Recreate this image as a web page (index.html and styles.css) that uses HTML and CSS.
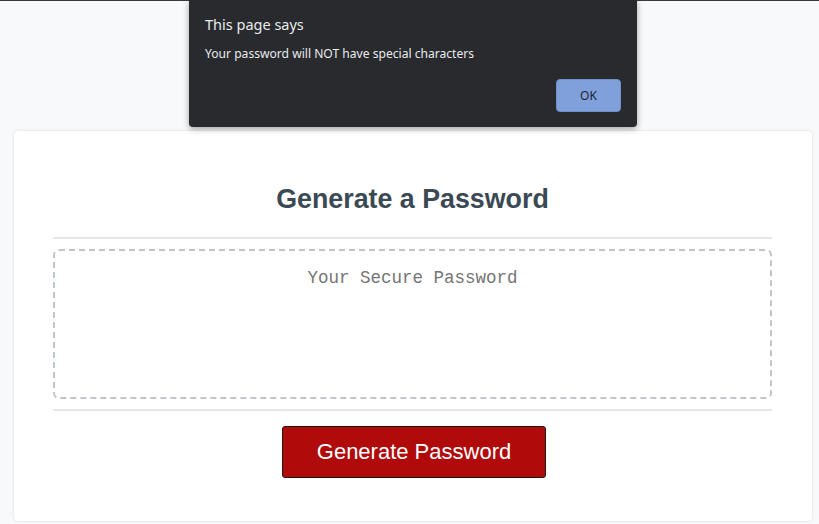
FILE: index.html
```html
<!DOCTYPE html>
<html lang="en">
<head>
<meta charset="utf-8">
<title>Password Generator</title>
<link rel="stylesheet" href="styles.css">
</head>
<body>
<div class="topline"></div>
<main class="wrapper">
  <section class="card">
    <header class="card-header">
      <h2>Generate a Password</h2>
    </header>
    <div class="card-body">
      <textarea readonly class="password" placeholder="Your Secure Password"></textarea>
    </div>
    <footer class="card-footer">
      <button class="btn">Generate Password</button>
    </footer>
  </section>
</main>
<div class="dialog">
  <div class="dialog-title">This page says</div>
  <div class="dialog-msg">Your password will NOT have special characters</div>
  <div class="dialog-actions"><button class="ok">OK</button></div>
</div>
</body>
</html>
```
FILE: styles.css
```css
* { box-sizing: border-box; }
html, body { margin: 0; padding: 0; }
body {
  background: #f8f9fa;
  font-family: "Liberation Sans", Arial, sans-serif;
  height: 524px;
  overflow: hidden;
  position: relative;
}
.topline { height: 1px; background: #3a3a3a; }
.wrapper { padding: 129px 6px 0 13px; }
.card {
  width: 800px;
  height: 392px;
  background: #fff;
  border: 1px solid #eceef0;
  border-radius: 5px;
  box-shadow: 0 0 3px rgba(0,0,0,0.05);
  padding: 0 40px 0 39px;
  display: flex;
  flex-direction: column;
}
.card-header {
  height: 108px;
  border-bottom: 2px solid #e7e7e7;
  display: flex;
  align-items: center;
  justify-content: center;
  padding-top: 31px;
}
.card-header h2 {
  margin: 0;
  font-size: 26.8px;
  font-weight: bold;
  color: hsl(206, 17%, 28%);
}
.card-body { padding: 10px 0; }
.password {
  display: block;
  width: 100%;
  height: 150px;
  border: 2px dashed #c0c5cb;
  border-radius: 6px;
  resize: none;
  text-align: center;
  font-family: "Liberation Mono", "DejaVu Sans Mono", monospace;
  font-size: 17.5px;
  padding: 17px 16px;
  outline: none;
}
.password::placeholder { color: #757575; }
.card-footer {
  border-top: 2px solid #e7e7e7;
  display: flex;
  justify-content: center;
  padding-top: 15px;
}
.btn {
  width: 264px;
  height: 52px;
  background: #b00a0a;
  color: #fff;
  border: 1px solid #1a1a1a;
  border-radius: 3px;
  font-family: "Liberation Sans", Arial, sans-serif;
  font-size: 22px;
  margin-left: 3px;
}
.dialog {
  position: absolute;
  left: 189px;
  top: 0;
  width: 448px;
  height: 127px;
  background: #292a2d;
  border-radius: 0 0 4px 4px;
  box-shadow: 0 2px 6px rgba(0,0,0,0.35);
  color: #e8eaed;
  font-family: "Noto Sans", "Open Sans", sans-serif;
  padding: 14px 16px 0 16px;
}
.dialog-title { font-size: 14.5px; line-height: 20px; }
.dialog-msg { font-size: 12.1px; line-height: 18px; margin-top: 11px; }
.dialog-actions { display: flex; justify-content: flex-end; margin-top: 16px; }
.ok {
  width: 65px;
  height: 33px;
  background: #7fa0da;
  border: 1px solid #6f8fc7;
  border-radius: 4px;
  color: #1e2433;
  font-family: "Noto Sans", "Open Sans", sans-serif;
  font-size: 12px;
}
```
